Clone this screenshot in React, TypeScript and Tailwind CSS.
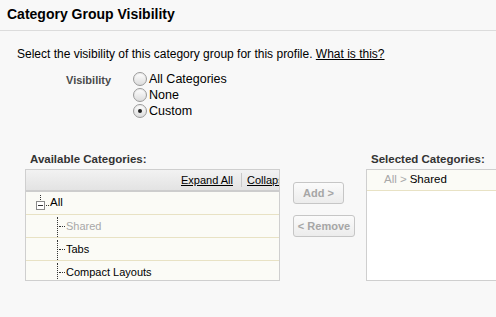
import React from "react";

function Radio({ checked, label }: { checked?: boolean; label: string }) {
    return (
        <label className="flex items-center h-[16px]">
            <span className="w-[14px] h-[14px] rounded-full border border-[#9a9a9a] bg-gradient-to-b from-[#ffffff] to-[#dcdcdc] flex items-center justify-center shadow-[inset_0_1px_1px_rgba(0,0,0,0.08)]">
                {checked && <span className="w-[4px] h-[4px] rounded-full bg-[#222]" />}
            </span>
            <span className="ml-[2px] text-[12.5px] text-black">{label}</span>
        </label>
    );
}

function TreeRow({ label, muted }: { label: string; muted?: boolean }) {
    return (
        <div className="relative h-[23px] shrink-0 flex items-center bg-[#fbfbf6] border-b border-[#e8e2c4]">
            <span className="absolute left-[31px] top-[2px] bottom-0 border-l border-dotted border-[#333]" />
            <span className="absolute left-[33px] top-[11px] w-[6px] border-t border-dotted border-[#333]" />
            <span className={"ml-[40px] text-[11px] " + (muted ? "text-[#a8a8a8]" : "text-black")}>{label}</span>
        </div>
    );
}

export default function App() {
    return (
        <div className="w-[496px] h-[317px] bg-[#f8f8f8] overflow-hidden" style={{ fontFamily: '"Liberation Sans", Arial, sans-serif' }}>
            <div className="h-[31px] border-b border-[#dcdcdc] px-[7px] pt-[4px]">
                <h1 className="text-[14px] font-bold text-black">Category Group Visibility</h1>
            </div>

            <div className="pl-[17px] pt-[14px]">
                <p className="text-[12px] text-black">
                    Select the visibility of this category group for this profile.{" "}
                    <a className="underline">What is this?</a>
                </p>

                <div className="flex mt-[8px]">
                    <div className="w-[116px] pl-[49px] pt-[1px] text-[11px] font-bold text-[#4a4a4a]">Visibility</div>
                    <div className="flex flex-col">
                        <Radio label="All Categories" />
                        <Radio label="None" />
                        <Radio label="Custom" checked />
                    </div>
                </div>
            </div>

            <div className="flex mt-[32px] pl-[25px]">
                <div className="w-[255px]">
                    <div className="text-[11.5px] font-bold text-[#333] pl-[5px] h-[18px]">Available Categories:</div>
                    <div className="h-[112px] border border-[#cfcfcf] overflow-hidden flex flex-col">
                        <div className="h-[22px] shrink-0 bg-gradient-to-b from-[#f2f2f2] to-[#e3e3e3] border-b-2 border-[#cdcdcd] flex items-center pl-[155px] whitespace-nowrap text-[11px] text-black">
                            <a className="underline">Expand All</a>
                            <span className="ml-[8px] mr-[5px] h-[14px] border-l border-[#c8c8c8]" />
                            <a className="underline">Collapse All</a>
                        </div>
                        <div className="relative h-[23px] shrink-0 flex items-center bg-[#fbfbf6] border-b border-[#e8e2c4]">
                            <span className="absolute left-[14px] top-[3px] h-[5px] border-l border-dotted border-[#333]" />
                            <span className="absolute left-[10px] top-[9px] w-[9px] h-[9px] border border-[#8a8a8a] bg-white flex items-center justify-center">
                                <span className="w-[5px] border-t border-[#333]" />
                            </span>
                            <span className="absolute left-[20px] top-[13px] w-[3px] border-t border-dotted border-[#333]" />
                            <span className="ml-[24px] text-[11.5px] text-black">All</span>
                        </div>
                        <TreeRow label="Shared" muted />
                        <TreeRow label="Tabs" />
                        <TreeRow label="Compact Layouts" />
                    </div>
                </div>

                <div className="flex flex-col gap-[11px] ml-[13px] pt-[31px]">
                    <button className="w-[51px] h-[22px] rounded-[3px] border border-[#c6c6c6] bg-gradient-to-b from-[#fbfbfb] to-[#ececec] text-[11px] font-bold text-[#a6a6a6]">Add &gt;</button>
                    <button className="w-[62px] h-[22px] rounded-[3px] border border-[#c6c6c6] bg-gradient-to-b from-[#fbfbfb] to-[#ececec] text-[11px] font-bold text-[#a6a6a6]">&lt; Remove</button>
                </div>

                <div className="ml-[11px] flex-1">
                    <div className="text-[11.5px] font-bold text-[#333] pl-[5px] h-[18px]">Selected Categories:</div>
                    <div className="h-[112px] border border-[#cfcfcf] border-r-0 bg-white">
                        <div className="h-[21px] bg-[#fbfbf6] border-b border-[#e8e2c4] flex items-center pl-[17px] text-[11.5px]">
                            <span className="text-[#a8a8a8]">All &gt;</span>
                            <span className="ml-[3px] text-black">Shared</span>
                        </div>
                    </div>
                </div>
            </div>
        </div>
    );
}
